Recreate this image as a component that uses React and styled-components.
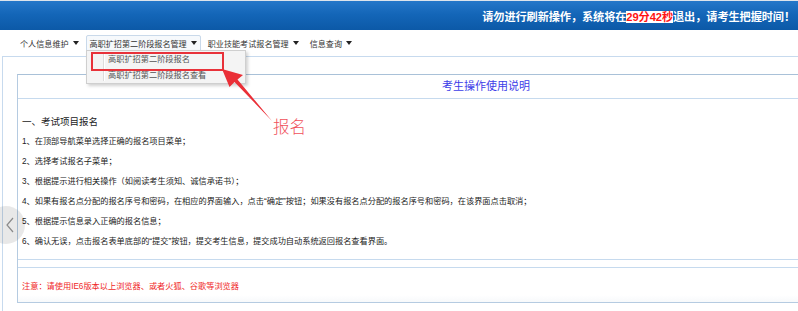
import React from 'react'
import styled, { createGlobalStyle } from 'styled-components'

const GlobalStyle = createGlobalStyle`
    html, body {
        margin: 0;
        padding: 0;
        background: #fff;
    }
    body {
        font-family: "Liberation Sans", "Noto Sans CJK SC", sans-serif;
        color: #333;
    }
`

const Page = styled.div`
    position: relative;
    width: 798px;
    height: 311px;
    overflow: hidden;
    border-top: 1px solid #dde4ec;
    box-sizing: border-box;
`

const Header = styled.div`
    height: 29px;
    display: flex;
    align-items: center;
    justify-content: flex-end;
    padding-right: 3px;
    background: linear-gradient(to bottom, #2577c9 0%, #1466b8 45%, #0c59a7 100%);
`

const Warning = styled.div`
    font-size: 11.2px;
    font-weight: bold;
    color: #fff;
    white-space: nowrap;
    letter-spacing: -0.1px;
`

const Countdown = styled.span`
    color: #ff1414;
    background: #fff;
`

const Nav = styled.div`
    position: relative;
    height: 26px;
    display: flex;
    align-items: center;
    gap: 3px;
    padding-left: 16px;
`

const MenuItem = styled.div`
    display: flex;
    align-items: center;
    height: 15px;
    padding: 0 3px;
    font-size: 8.1px;
    color: #333;
    white-space: nowrap;
    border: 1px solid ${p => (p.$open ? '#c9d9ea' : 'transparent')};
    background: ${p => (p.$open ? '#f6f9fc' : 'transparent')};
    border-radius: 2px;
`

const Caret = styled.span`
    width: 0;
    height: 0;
    margin-left: 4px;
    border-left: 3px solid transparent;
    border-right: 3px solid transparent;
    border-top: 4px solid #222;
`

const Dropdown = styled.div`
    position: absolute;
    left: 86px;
    top: 20px;
    width: 160px;
    height: 34px;
    background: #f4f4f4;
    border: 1px solid #cfcfcf;
    box-shadow: 2px 2px 3px rgba(0, 0, 0, 0.18);
    z-index: 5;
    display: flex;
    flex-direction: column;
    padding-top: 1px;
    box-sizing: border-box;
    &::before {
        content: '';
        position: absolute;
        left: 16px;
        top: 2px;
        bottom: 2px;
        width: 1px;
        background: #dcdcdc;
        box-shadow: 1px 0 0 #fff;
    }
`

const DropItem = styled.div`
    position: relative;
    height: 16px;
    line-height: 16px;
    padding-left: 21px;
    font-size: 8.2px;
    color: #555;
    white-space: nowrap;
`

const Highlight = styled.div`
    position: absolute;
    left: 4px;
    top: 0;
    width: 129px;
    height: 15px;
    border: 2px solid #e8323a;
`

const Frame = styled.div`
    width: 970px;
    margin-left: 2px;
    border-left: 1px solid #c7daee;
    border-top: 1px solid #c7daee;
    padding: 17px 0 0 14px;
    height: 300px;
`

const Panel = styled.div`
    width: 936px;
    border: 1px solid #b5cbe1;
    border-top-color: #a9c1d8;
`

const TitleRow = styled.div`
    height: 23px;
    line-height: 23px;
    text-align: center;
    font-size: 11px;
    color: #3d3de8;
    border-bottom: 1px solid #c6daee;
`

const Content = styled.div`
    padding: 13px 0 7px 4px;
    border-bottom: 1px solid #c6daee;
`

const Heading = styled.div`
    font-size: 9.5px;
    line-height: 20px;
    color: #222;
`

const Step = styled.div`
    font-size: 8.2px;
    line-height: 20px;
    color: #222;
    white-space: nowrap;
`

const Gap = styled.div`
    height: 7px;
`

const NoteRow = styled.div`
    height: 34px;
    display: flex;
    align-items: center;
    padding-left: 4px;
    border-top: 1px solid #c6daee;
    font-size: 8.2px;
    color: #f02828;
    background: linear-gradient(to bottom, #fff 80%, #f7f9fb 100%);
`

const Callout = styled.div`
    position: absolute;
    left: 216px;
    top: 66px;
    width: 92px;
    height: 70px;
    z-index: 6;
    display: flex;
    align-items: flex-start;
`

const CalloutLabel = styled.div`
    align-self: flex-end;
    margin-left: -3px;
    font-family: "Noto Sans CJK SC", serif;
    font-weight: 300;
    font-size: 16.5px;
    line-height: 22px;
    color: #f0505a;
`

const SlideBack = styled.div`
    position: absolute;
    left: -13px;
    top: 205px;
    width: 38px;
    height: 38px;
    border-radius: 50%;
    background: rgba(0, 0, 0, 0.09);
    display: flex;
    align-items: center;
    justify-content: center;
    padding-left: 8px;
    box-sizing: border-box;
`

const menus = [
    { label: '个人信息维护' },
    { label: '高职扩招第二阶段报名管理', open: true },
    { label: '职业技能考试报名管理' },
    { label: '信息查询' }
]

const steps = [
    '1、在顶部导航菜单选择正确的报名项目菜单；',
    '2、选择考试报名子菜单；',
    '3、根据提示进行相关操作（如阅读考生须知、诚信承诺书）；',
    '4、如果有报名点分配的报名序号和密码，在相应的界面输入，点击“确定”按钮；如果没有报名点分配的报名序号和密码，在该界面点击取消；',
    '5、根据提示信息录入正确的报名信息；',
    '6、确认无误，点击报名表单底部的“提交”按钮，提交考生信息，提交成功自动系统返回报名查看界面。'
]

const App = () => {
    return (
        <Page>
            <GlobalStyle />
            <Header>
                <Warning>
                    请勿进行刷新操作，系统将在<Countdown>29分42秒</Countdown>退出，请考生把握时间！
                </Warning>
            </Header>
            <Nav>
                {menus.map(m => (
                    <MenuItem key={m.label} $open={m.open}>
                        {m.label}
                        <Caret />
                    </MenuItem>
                ))}
                <Dropdown>
                    <DropItem>
                        高职扩招第二阶段报名
                        <Highlight />
                    </DropItem>
                    <DropItem>高职扩招第二阶段报名查看</DropItem>
                </Dropdown>
            </Nav>
            <Frame>
                <Panel>
                    <TitleRow>考生操作使用说明</TitleRow>
                    <Content>
                        <Heading>一、考试项目报名</Heading>
                        {steps.map(s => (
                            <Step key={s}>{s}</Step>
                        ))}
                    </Content>
                    <Gap />
                    <NoteRow>注意：请使用IE6版本以上浏览器、或者火狐、谷歌等浏览器</NoteRow>
                </Panel>
            </Frame>
            <Callout>
                <svg width="60" height="58" viewBox="0 0 60 58">
                    <path
                        d="M6 2 L27 8 L21.5 12.5 L56 54 L18.5 15 L13.5 20 Z"
                        fill="#ea2f37"
                    />
                </svg>
                <CalloutLabel>报名</CalloutLabel>
            </Callout>
            <SlideBack>
                <svg width="8" height="16" viewBox="0 0 8 16">
                    <path d="M7 1 L1 8 L7 15" fill="none" stroke="#8a8a8a" strokeWidth="1.2" />
                </svg>
            </SlideBack>
        </Page>
    )
}

export default App
